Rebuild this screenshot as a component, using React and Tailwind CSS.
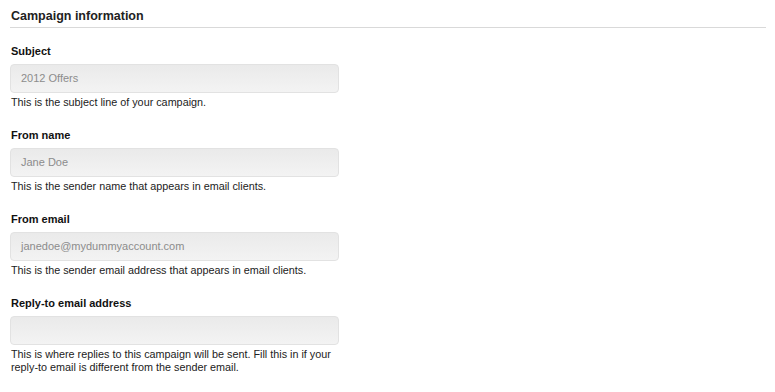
import React from "react";

const fields = [
  { label: "Subject", value: "2012 Offers", help: "This is the subject line of your campaign." },
  { label: "From name", value: "Jane Doe", help: "This is the sender name that appears in email clients." },
  { label: "From email", value: "janedoe@mydummyaccount.com", help: "This is the sender email address that appears in email clients." },
  { label: "Reply-to email address", value: "", help: "This is where replies to this campaign will be sent. Fill this in if your reply-to email is different from the sender email." },
];

export default function App() {
  return (
    <div
      className="w-[775px] h-[392px] bg-white overflow-hidden text-[#222]"
      style={{ fontFamily: '"Liberation Sans", Arial, Helvetica, sans-serif' }}
    >
      <div className="ml-[10px] w-[756px] pt-[8px] pb-[3px] border-b border-[#d9d9d9]">
        <h2 className="text-[12.5px] leading-[16px] font-bold text-[#222] pl-[1px]">Campaign information</h2>
      </div>
      <div className="ml-[10px] w-[330px] pt-[16px] flex flex-col gap-[19px]">
        {fields.map((f) => (
          <div key={f.label} className="flex flex-col">
            <label className="text-[11px] leading-[14px] font-bold text-[#111] pl-[1px]">{f.label}</label>
            <div className="mt-[6px] h-[29px] w-[329px] rounded-[4px] border border-[#e2e2e2] bg-gradient-to-b from-[#eaeaea] to-[#f3f3f3] flex items-center pl-[10px] text-[11px] text-[#8c8c8c]">
              {f.value}
            </div>
            <p className="mt-[3px] text-[10.8px] leading-[13px] text-[#222] pl-[1px]">{f.help}</p>
          </div>
        ))}
      </div>
    </div>
  );
}
